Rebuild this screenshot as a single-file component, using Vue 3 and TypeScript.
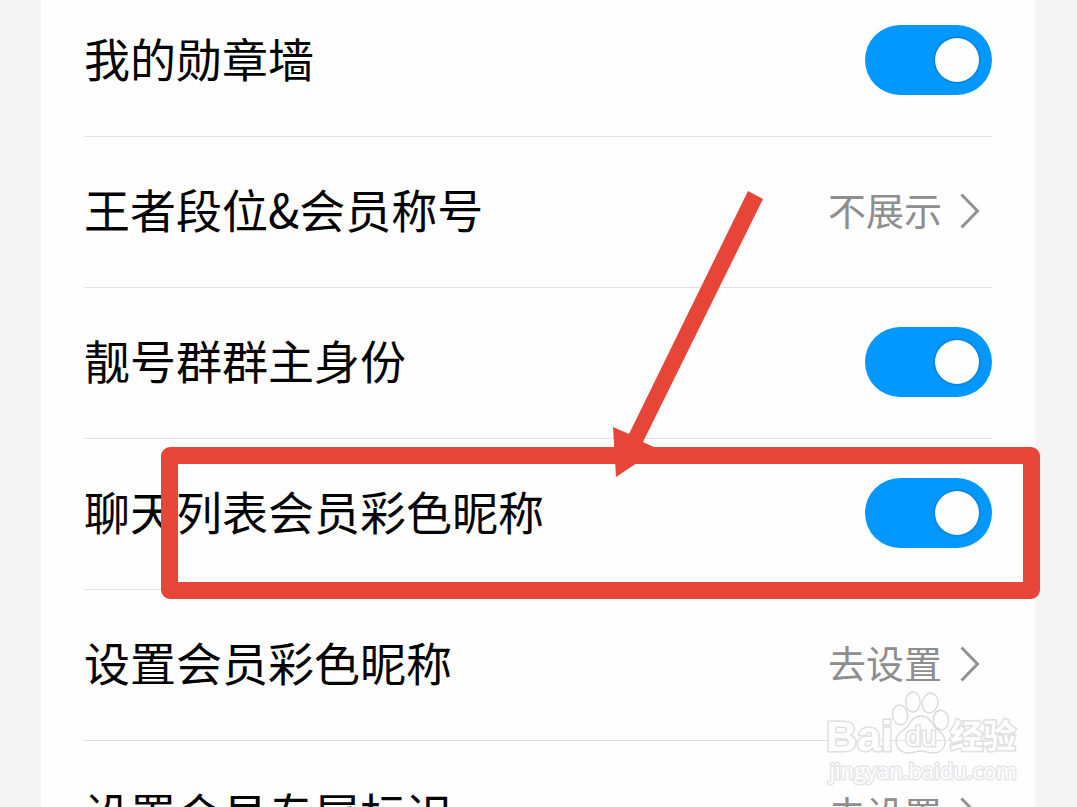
<script setup lang="ts">
import { ref } from 'vue'

interface Row {
  id: string
  label: string
  kind: 'switch' | 'link'
  on?: boolean
  value?: string
  marked?: boolean
}

const rows = ref<Row[]>([
  { id: 'medal', label: '我的勋章墙', kind: 'switch', on: true },
  { id: 'rank', label: '王者段位&会员称号', kind: 'link', value: '不展示' },
  { id: 'group', label: '靓号群群主身份', kind: 'switch', on: true },
  { id: 'nick', label: '聊天列表会员彩色昵称', kind: 'switch', on: true, marked: true },
  { id: 'setnick', label: '设置会员彩色昵称', kind: 'link', value: '去设置' },
  { id: 'badge', label: '设置会员专属标识', kind: 'link', value: '去设置' },
])
</script>

<template>
  <main class="page">
    <section class="card">
      <ul class="list">
        <li v-for="row in rows" :key="row.id" class="row">
          <template v-if="row.kind === 'switch'">
            <label class="label" :for="row.id">{{ row.label }}</label>
            <input :id="row.id" v-model="row.on" class="switch" type="checkbox" role="switch" />
          </template>
          <button v-else class="link" type="button">
            <span class="label">{{ row.label }}</span>
            <span class="value">{{ row.value }}</span>
            <svg class="chevron" viewBox="0 0 20 36" aria-hidden="true">
              <path d="M1.5 1.5 L17.5 18 L1.5 34.5" />
            </svg>
          </button>
          <template v-if="row.marked">
            <div class="frame"></div>
            <svg class="arrow" viewBox="0 0 152 288" aria-hidden="true">
              <path d="M136 1 L151 9 L31 252 L46 259 L4 287 L1 237 L17 244 Z" />
            </svg>
          </template>
        </li>
      </ul>
    </section>
    <div class="watermark">
      <div class="brand">
        <span class="latin">Bai</span>
        <span class="paw">
          <svg viewBox="0 0 58 66" aria-hidden="true">
            <ellipse cx="8" cy="24" rx="7.5" ry="10" transform="rotate(-8 8 24)" />
            <ellipse cx="21" cy="11" rx="7.2" ry="10" />
            <ellipse cx="38" cy="12" rx="7.8" ry="10" transform="rotate(12 38 12)" />
            <ellipse cx="49" cy="29" rx="7.6" ry="9.8" transform="rotate(-6 49 29)" />
            <path d="M29 25 C22 25 19 30 16 35 C11 40 4 43 4 50 C4 58 10 62 17 62 C22 62 25 60 29 60 C33 60 36 62 41 62 C49 62 53 57 53 50 C53 43 46 40 42 35 C39 30 36 25 29 25 Z" />
          </svg>
          <span class="du">du</span>
        </span>
        <span class="cjk">经验</span>
      </div>
      <div class="site">jingyan.baidu.com</div>
    </div>
  </main>
</template>

<style>
body {
  margin: 0;
  background: #f5f5f5;
}
</style>

<style scoped>
.page {
  position: relative;
  box-sizing: border-box;
  height: 100vh;
  padding: 0 42px 0 41px;
  overflow: hidden;
  background: #f5f5f5;
  font-family: "Noto Sans CJK SC", sans-serif;
}

.card {
  min-height: 100%;
  padding: 0 43px;
  background: #fefefe;
}

/* The list is scrolled a little, so the first row starts above the window */
.list {
  margin: -14px 0 0;
  padding: 0;
  list-style: none;
}

.row {
  position: relative;
  display: flex;
  align-items: center;
  justify-content: space-between;
  padding: 39px 0 41px;
  border-bottom: 1px solid #e2e2e2;
}

.label {
  flex: 1;
  padding-bottom: 6px;
  font-size: 46px;
  line-height: 64px;
  color: #040404;
  text-align: left;
  white-space: nowrap;
}

.link {
  display: flex;
  flex: 1;
  align-items: center;
  padding: 0 12px 0 0;
  border: 0;
  background: none;
  font-family: inherit;
}

.value {
  padding-bottom: 4px;
  font-size: 38px;
  line-height: 66px;
  color: #8e8e8e;
}

.chevron {
  width: 20px;
  height: 36px;
  margin-left: 18px;
  fill: none;
  stroke: #929292;
  stroke-width: 3;
}

.switch {
  display: flex;
  align-items: center;
  justify-content: flex-start;
  box-sizing: border-box;
  width: 127px;
  height: 70px;
  margin: 0;
  padding: 0 13px;
  border-radius: 35px;
  background: #c8c8c8;
  appearance: none;
}

.switch:checked {
  justify-content: flex-end;
  background: #0398ff;
}

.switch::before {
  content: "";
  width: 44px;
  height: 44px;
  border-radius: 50%;
  background: #fefefe;
  box-shadow: 0 0 3px rgba(0, 50, 100, 0.6);
}

.frame {
  position: absolute;
  top: 8px;
  right: -48px;
  bottom: -10px;
  left: 77px;
  z-index: 1;
  border: 17px solid #e84539;
  border-radius: 9px;
  pointer-events: none;
}

.arrow {
  position: absolute;
  right: 228px;
  bottom: 111px;
  z-index: 1;
  width: 152px;
  height: 288px;
  fill: #e84539;
  pointer-events: none;
}

.watermark {
  position: absolute;
  right: 57px;
  bottom: 22px;
  z-index: 2;
  width: 194px;
  color: #fefefe;
  font-family: "Liberation Sans", "Noto Sans CJK SC", sans-serif;
  paint-order: stroke fill;
  -webkit-text-stroke: 3px #e0e0e0;
  pointer-events: none;
}

.brand {
  display: flex;
  align-items: flex-end;
  height: 66px;
}

.latin {
  width: 66px;
  font-size: 43px;
  font-weight: 700;
  line-height: 42px;
}

.paw {
  position: relative;
  width: 58px;
  height: 66px;
}

.paw svg {
  display: block;
  width: 58px;
  height: 66px;
  fill: none;
  stroke: #dadada;
  stroke-width: 1.4;
}

.du {
  position: absolute;
  right: 0;
  bottom: 4px;
  left: 0;
  font-size: 28px;
  line-height: 32px;
  text-align: center;
}

.cjk {
  font-size: 33px;
  font-weight: 700;
  line-height: 40px;
}

.site {
  font-family: "Open Sans", sans-serif;
  font-size: 22px;
  line-height: 26px;
  padding-bottom: 2px;
  text-align: center;
  -webkit-text-stroke: 3px #e6e6e6;
}
</style>
